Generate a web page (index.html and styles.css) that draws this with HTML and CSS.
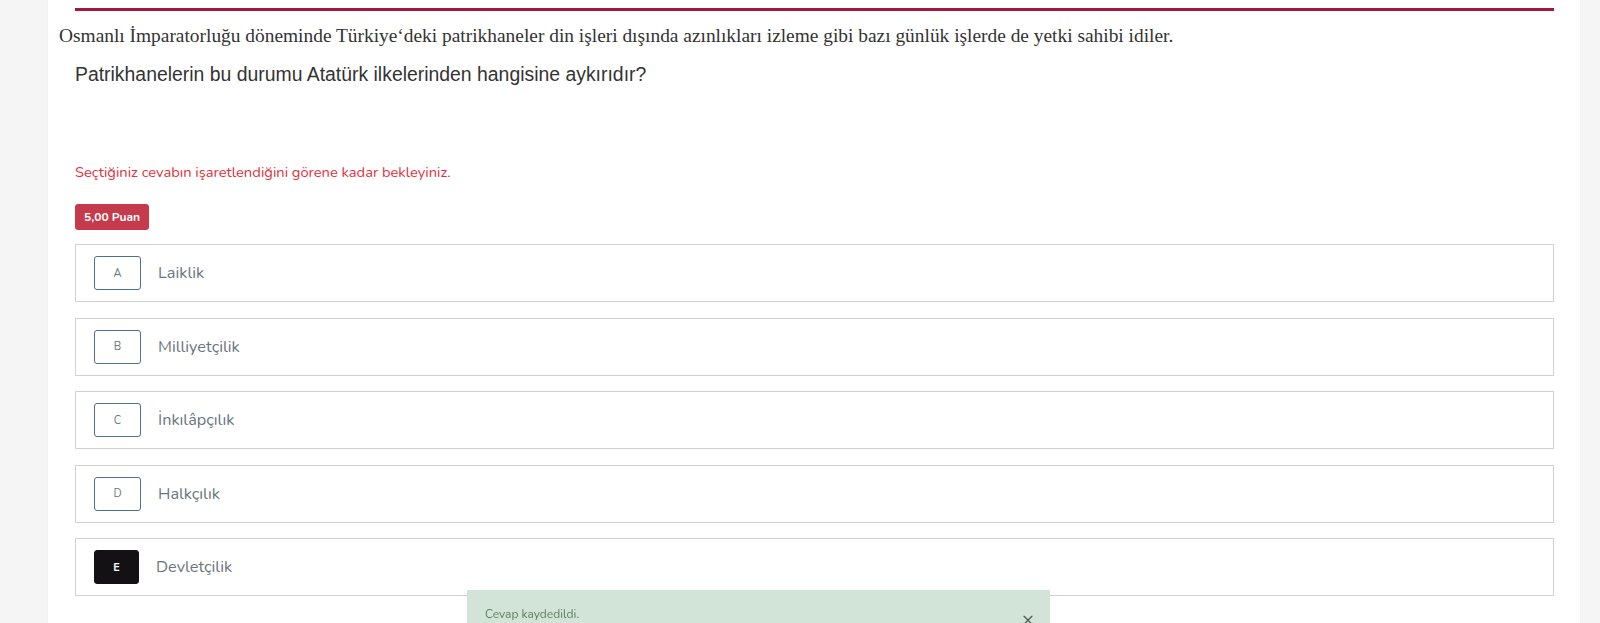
FILE: index.html
```html
<!DOCTYPE html>
<html lang="tr">
<head>
<meta charset="utf-8">
<title>Soru</title>
<link rel="stylesheet" href="styles.css">
</head>
<body>
<div class="page">
  <main class="card">
    <div class="rule"></div>
    <p class="stem">Osmanlı İmparatorluğu döneminde Türkiye‘deki patrikhaneler din işleri dışında azınlıkları izleme gibi bazı günlük işlerde de yetki sahibi idiler.</p>
    <p class="question">Patrikhanelerin bu durumu Atatürk ilkelerinden hangisine aykırıdır?</p>
    <p class="notice">Seçtiğiniz cevabın işaretlendiğini görene kadar bekleyiniz.</p>
    <span class="badge">5,00 Puan</span>
    <ul class="options">
      <li class="option"><span class="letter">A</span><span class="label">Laiklik</span></li>
      <li class="option"><span class="letter">B</span><span class="label">Milliyetçilik</span></li>
      <li class="option"><span class="letter">C</span><span class="label">İnkılâpçılık</span></li>
      <li class="option"><span class="letter">D</span><span class="label">Halkçılık</span></li>
      <li class="option selected"><span class="letter">E</span><span class="label">Devletçilik</span></li>
    </ul>
  </main>
</div>
<div class="toast">
  <span class="toast-text">Cevap kaydedildi.</span>
  <span class="toast-close">×</span>
</div>
</body>
</html>
```

FILE: styles.css
```css
html, body {
  margin: 0;
  padding: 0;
}
body {
  background: #f5f5f5;
  height: 623px;
  overflow: hidden;
}
.page {
  padding: 0 20px 0 48px;
}
.card {
  background: #ffffff;
  padding: 8px 26px 40px 27px;
  min-height: 640px;
  box-sizing: border-box;
  box-shadow: 0 0 2px rgba(0,0,0,0.04);
}
.rule {
  height: 3px;
  background: #a3183a;
}
.stem {
  font-family: "Liberation Serif", "Times New Roman", serif;
  font-size: 19.4px;
  line-height: 24px;
  color: #333333;
  margin: 13px 0 0 -16px;
}
.question {
  font-family: "Liberation Sans", Arial, sans-serif;
  font-size: 19.4px;
  line-height: 24px;
  color: #333333;
  margin: 14px 0 0 0;
}
.notice {
  font-family: "Nunito", Lato, "Open Sans", sans-serif;
  font-size: 14.7px;
  line-height: 20px;
  color: #e3303c;
  margin: 76px 0 0 0;
}
.badge {
  display: inline-block;
  margin-top: 22px;
  height: 26px;
  line-height: 26px;
  padding: 0 9px;
  background: #c53b4b;
  color: #ffffff;
  font-family: "Nunito", Lato, "Open Sans", sans-serif;
  font-weight: 700;
  font-size: 12px;
  border-radius: 3px;
}
.options {
  list-style: none;
  margin: 14px 0 0 0;
  padding: 0;
  display: flex;
  flex-direction: column;
  gap: 15.6px;
}
.option {
  display: flex;
  align-items: center;
  height: 58px;
  box-sizing: border-box;
  border: 1px solid #d2d2d2;
  padding: 0 18px;
}
.letter {
  width: 47px;
  height: 34px;
  box-sizing: border-box;
  border: 1px solid #4d6f90;
  border-radius: 3px;
  display: flex;
  align-items: center;
  justify-content: center;
  font-family: "Nunito", Lato, "Open Sans", sans-serif;
  font-size: 11px;
  color: #6c757d;
}
.label {
  margin-left: 17px;
  font-family: "Nunito", Lato, "Open Sans", sans-serif;
  font-size: 16.3px;
  color: #6c757d;
}
.selected .letter {
  width: 45px;
  background: #141114;
  border-color: #141114;
  color: #ffffff;
  font-weight: 700;
}
.toast {
  position: fixed;
  left: 467px;
  top: 590px;
  width: 583px;
  height: 60px;
  box-sizing: border-box;
  background: #d2e3d7;
  padding: 16px 16px 0 18px;
  display: flex;
  justify-content: space-between;
  align-items: flex-start;
  font-family: "Nunito", Lato, "Open Sans", sans-serif;
  box-shadow: 0 -4px 10px rgba(0,0,0,0.02);
}
.toast-text {
  font-size: 12px;
  color: #5e7f63;
}
.toast-close {
  font-size: 20px;
  line-height: 18px;
  color: #4e5a52;
  margin-top: 5px;
}
```
